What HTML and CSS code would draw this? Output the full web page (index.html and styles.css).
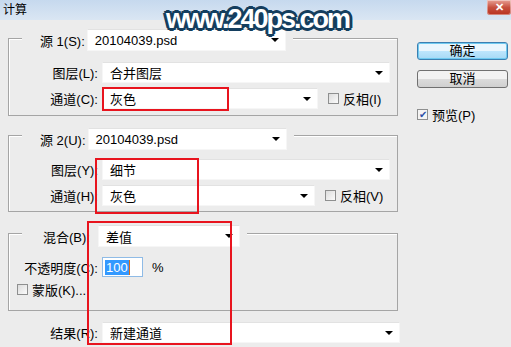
FILE: index.html
```html
<!DOCTYPE html>
<html lang="zh-CN">
<head>
    <meta charset="UTF-8">
    <title>计算</title>
    <link rel="stylesheet" href="styles.css">
</head>
<body>
    <div class="titlebar">
        <span class="title">计算</span>
        <span class="close">&#x2715;</span>
    </div>

    <div class="content">
        <div class="left">
            <div class="group group-1">
                <div class="legend">
                    <span class="lbl">源 1(S):</span>
                    <div class="combo w-source"><span>20104039.psd</span><i class="arrow"></i></div>
                </div>
                <div class="row row-layer">
                    <span class="lbl lbl-right">图层(L):</span>
                    <div class="combo w-wide"><span>合并图层</span><i class="arrow"></i></div>
                </div>
                <div class="row row-channel">
                    <span class="lbl lbl-right">通道(C):</span>
                    <div class="combo w-chan1"><span>灰色</span><i class="arrow"></i></div>
                    <span class="check"></span>
                    <span class="check-text">反相(I)</span>
                </div>
            </div>

            <div class="group group-2">
                <div class="legend">
                    <span class="lbl">源 2(U):</span>
                    <div class="combo w-source"><span>20104039.psd</span><i class="arrow"></i></div>
                </div>
                <div class="row row-layer2">
                    <span class="lbl lbl-right">图层(Y):</span>
                    <div class="combo w-wide"><span>细节</span><i class="arrow"></i></div>
                </div>
                <div class="row row-channel">
                    <span class="lbl lbl-right">通道(H):</span>
                    <div class="combo w-chan2"><span>灰色</span><i class="arrow"></i></div>
                    <span class="check"></span>
                    <span class="check-text">反相(V)</span>
                </div>
            </div>

            <div class="group group-3">
                <div class="legend legend-blend">
                    <span class="lbl">混合(B):</span>
                    <div class="combo w-blend"><span>差值</span><i class="arrow"></i></div>
                </div>
                <div class="row row-opacity">
                    <span class="lbl lbl-right">不透明度(C):</span>
                    <div class="num-input"><span class="sel">100</span><span class="caret"></span></div>
                    <span class="pct">%</span>
                </div>
                <div class="row row-mask">
                    <span class="check"></span>
                    <span class="check-text">蒙版(K)...</span>
                </div>
            </div>

            <div class="row row-result">
                <span class="lbl lbl-right">结果(R):</span>
                <div class="combo w-result"><span>新建通道</span><i class="arrow"></i></div>
            </div>
        </div>

        <div class="right">
            <button class="btn btn-default">确定</button>
            <button class="btn">取消</button>
            <div class="preview">
                <span class="check checked">&#x2714;</span>
                <span class="check-text">预览(P)</span>
            </div>
        </div>
    </div>

    <!-- annotation marks -->
    <div class="mark mark-1"></div>
    <div class="mark mark-2"></div>
    <div class="mark mark-3"></div>

    <div class="watermark">www.240ps.com</div>
</body>
</html>
```

FILE: styles.css
```css
body {
    margin: 0;
    width: 511px;
    height: 347px;
    overflow: hidden;
    position: relative;
    background: #ececec;
    font-family: "Liberation Sans", "Noto Sans CJK SC", sans-serif;
    font-size: 13px;
    color: #000;
}

/* title bar */
.titlebar {
    height: 20px;
    display: flex;
    justify-content: space-between;
    align-items: flex-start;
    background: linear-gradient(#c6d9ee, #dae6f3);
}

.title {
    padding: 3px 0 0 3px;
    font-size: 12px;
    line-height: 14px;
}

.close {
    width: 24px;
    height: 15px;
    line-height: 15px;
    text-align: center;
    color: #fff;
    font-size: 11px;
    font-weight: bold;
    border-radius: 0 0 3px 3px;
    background: linear-gradient(#e8a095, #c7503f 50%, #b8321f);
    box-shadow: inset 0 0 0 1px rgba(255, 255, 255, 0.4);
}

/* main area */
.content {
    display: flex;
    padding-left: 8px;
}

.left {
    width: 392px;
}

.right {
    margin-left: 17px;
    width: 91px;
    display: flex;
    flex-direction: column;
}

.group {
    width: 388px;
    border: 1px solid #a5a5a5;
    box-shadow: inset 1px 1px 0 #fff;
}

.group-1 {
    margin-top: 18px;
    padding-bottom: 6px;
}

.group-2 {
    margin-top: 19px;
    padding-bottom: 5px;
}

.group-3 {
    margin-top: 21px;
    padding-bottom: 11px;
}

.legend {
    display: flex;
    align-items: center;
    width: fit-content;
    margin-left: 13px;
    padding: 0 7px 0 18px;
    background: #ececec;
}

.group-1 .legend {
    margin-top: -10px;
}

.group-2 .legend {
    margin-top: -8px;
}

.legend-blend {
    margin-top: -9px;
    padding-left: 21px;
}

.legend .lbl {
    margin-right: 2px;
}

.legend-blend .lbl {
    margin-right: 8px;
}

.row {
    display: flex;
    align-items: center;
}

.lbl {
    white-space: nowrap;
}

.lbl-right {
    width: 89px;
    text-align: right;
    margin-right: 4px;
}

.row-layer {
    margin-top: 11px;
}

.row-layer2 {
    margin-top: 9px;
}

.row-channel {
    margin-top: 5px;
}

.row-opacity {
    margin-top: 10px;
}

.row-mask {
    margin-top: 3px;
    padding-left: 8px;
}

.row-result {
    margin-top: 11px;
}

.row-result .lbl-right {
    width: 90px;
}

/* combo boxes */
.combo {
    height: 21px;
    box-sizing: border-box;
    display: flex;
    align-items: center;
    justify-content: space-between;
    padding: 0 6px 0 7px;
    background: #fff;
    border: 1px solid #f6f6f6;
    border-top-color: #e2e2e2;
}

.legend .combo {
    height: 22px;
}

.w-source { width: 199px; }
.w-wide { width: 288px; }
.w-chan1 { width: 216px; }
.w-chan2 { width: 213px; }
.w-blend { width: 142px; }
.w-result { width: 298px; }

.arrow {
    width: 0;
    height: 0;
    border-left: 4px solid transparent;
    border-right: 4px solid transparent;
    border-top: 4px solid #000;
}

/* check boxes */
.check {
    width: 11px;
    height: 11px;
    box-sizing: border-box;
    border: 1px solid #8e8f8f;
    background: linear-gradient(135deg, #dcdcdc, #fbfbfb);
    flex-shrink: 0;
}

.row-channel .check {
    margin-left: 10px;
}

.check-text {
    margin-left: 4px;
    white-space: nowrap;
}

.checked {
    color: #2a4fa6;
    font-size: 10px;
    line-height: 9px;
    text-align: center;
    background: #f4f4f4;
}

/* opacity field */
.num-input {
    width: 41px;
    height: 20px;
    box-sizing: border-box;
    display: flex;
    align-items: center;
    padding-left: 2px;
    border: 1px solid #8fbbe6;
    background: #fff;
}

.sel {
    background: #3399ff;
    color: #fff;
    line-height: 15px;
    padding: 0 1px;
}

.caret {
    width: 1px;
    height: 15px;
    background: #d96c1b;
}

.pct {
    margin-left: 9px;
}

/* dialog buttons */
.btn {
    height: 18px;
    padding: 0;
    font-family: inherit;
    font-size: 13px;
    line-height: 14px;
    border: 1px solid #707070;
    border-radius: 3px;
    background: linear-gradient(#f2f2f2 50%, #dcdcdc 50%, #d0d0d0);
}

.btn-default {
    margin-top: 22px;
    border-color: #3c7fb1;
    box-shadow: inset 0 0 0 1px #6fcaf0;
    background: linear-gradient(#eaf6fd 50%, #bee6fd 50%, #a7d9f5);
}

.btn + .btn {
    margin-top: 10px;
}

.preview {
    margin-top: 17px;
    display: flex;
    align-items: center;
}

/* red annotation frames */
.mark {
    position: absolute;
    border: 2px solid #e8141e;
    box-sizing: border-box;
}

.mark-1 {
    left: 102px;
    top: 87px;
    width: 127px;
    height: 24px;
}

.mark-2 {
    left: 95px;
    top: 158px;
    width: 104px;
    height: 56px;
}

.mark-3 {
    left: 87px;
    top: 221px;
    width: 145px;
    height: 124px;
}

.watermark {
    position: absolute;
    top: 3px;
    left: 0;
    right: 0;
    text-align: center;
    padding-left: 4px;
    font-family: "Liberation Sans", sans-serif;
    font-weight: bold;
    font-size: 27px;
    line-height: 32px;
    letter-spacing: -2px;
    color: #fff;
    text-shadow:
        2px 0 0 #143e5e, -2px 0 0 #143e5e, 0 2px 0 #143e5e, 0 -2px 0 #143e5e,
        2px 2px 0 #143e5e, -2px -2px 0 #143e5e, 2px -2px 0 #143e5e, -2px 2px 0 #143e5e,
        3px 0 0 #143e5e, -3px 0 0 #143e5e, 0 3px 0 #143e5e, 0 -3px 0 #143e5e;
}
```
